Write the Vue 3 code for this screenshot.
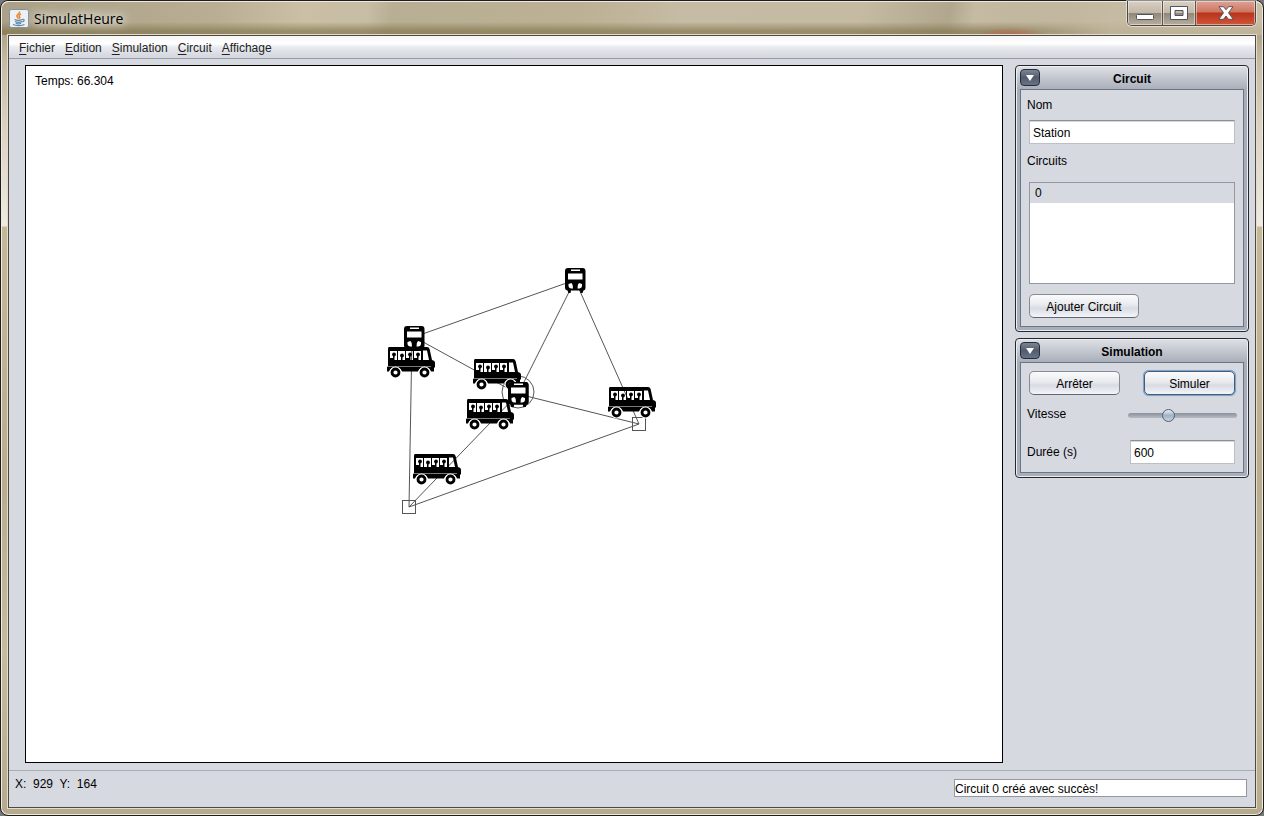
<script setup>
import { ref } from 'vue'

const menus = ['Fichier', 'Edition', 'Simulation', 'Circuit', 'Affichage']
const name = ref('Station')
const circuits = ref(['0'])
const selected = ref('0')
const speed = ref(35)
const duration = ref('600')
const message = ref('Circuit 0 créé avec succès!')

const segments = [
  [549, 214, 388, 271],
  [549, 214, 492, 328],
  [549, 214, 613, 358],
  [388, 271, 492, 328],
  [492, 328, 613, 358],
  [613, 358, 383, 441],
  [492, 328, 383, 441],
  [386, 271, 383, 441],
]
const stations = [[539, 202], [378, 260], [482, 316]]
const nodes = [[606, 351], [376, 434]]
const buses = [[361, 281], [447, 293], [440, 333], [582, 321], [387, 388]]
</script>

<template>
  <div class="window">
    <header class="titlebar">
      <svg class="java" width="20" height="19" viewBox="0 0 20 19" aria-hidden="true">
        <rect x=".5" y=".5" width="19" height="18" rx="2" fill="#eef1f4" stroke="#7d93a8" />
        <path d="M10.5 2.5c1 2-3.5 3-2.500 5 .4.800 1 1.200 1.300 2M12 5c-2 1-2.400 2-1.400 3 .5.700.2 1.200-.4 1.800" fill="none" stroke="#e8822a" stroke-width="1.500" />
        <path d="M5.500 10.500c2 .8 6 .8 8 0M6 12.500c2 .9 5 .9 7 0M6.700 14.300c1.500.6 4 .6 5.500 0M13.500 10.300c2.200-.4 2.300 1.800-.3 2.700M4 15.500c3 1.500 9 1.400 11.500 0" fill="none" stroke="#5f86a3" stroke-width="1.200" />
      </svg>
      <h1>SimulatHeure</h1>
      <div class="controls">
        <button type="button" aria-label="Réduire">
          <svg width="18" height="6"><rect x=".5" y=".5" width="17" height="5" rx="1" fill="#fff" stroke="#4d535f" /></svg>
        </button>
        <button type="button" aria-label="Agrandir">
          <svg width="18" height="14"><path d="M.5.5h17v13H.5zM5 4.500v5h8v-5z" fill="#fff" fill-rule="evenodd" stroke="#4d535f" /></svg>
        </button>
        <button type="button" class="close" aria-label="Fermer">
          <svg width="16" height="14"><path d="M1 .700h4.500L8 3.800 10.500.700H15L10.500 6.800l4.700 6.500h-4.700L8 10l-2.500 3.300H.8l4.700-6.500z" fill="#fff" stroke="#5d5257" /></svg>
        </button>
      </div>
    </header>

    <div class="content">
      <nav class="menubar">
        <button v-for="m in menus" :key="m" type="button"><u>{{ m[0] }}</u>{{ m.slice(1) }}</button>
      </nav>

      <main>
        <section class="canvas">
          <p>Temps: 66.304</p>
          <svg class="network" role="img" aria-label="Réseau">
            <defs>
              <g id="bus">
                <path fill-rule="evenodd" d="M2 0h38q2 0 2.600 2l2.400 11q3 .500 3 3v4.500h-1v4h-3a7 7 0 0 0-13 0H15a7 7 0 0 0-13 0H0V20h1V2q0-2 1-2zM3 4v9h7V4zM11 4v9h7V4zM19 4v9h7V4zM27 4v9h7V4zM36 3.500V13h6l-2-9.500z" />
                <path d="M0 19.500h44" stroke="#999" stroke-width=".8" />
                <g fill="#fff" stroke="#fff" stroke-width="6">
                  <circle cx="8.500" cy="25.500" r="3" /><circle cx="37.500" cy="25.500" r="3" />
                </g>
                <g fill="#fff" stroke="#000" stroke-width="2.800">
                  <circle cx="8.500" cy="25.500" r="3.500" /><circle cx="37.500" cy="25.500" r="3.500" />
                </g>
                <g>
                  <circle cx="7" cy="7.500" r="1.900" /><circle cx="15" cy="8.500" r="1.900" />
                  <circle cx="23" cy="7.500" r="1.900" /><circle cx="31" cy="7.500" r="1.900" />
                  <path d="M6 8h1.500v5H6zM3 11h3v2H3zM14 9h1.500v4H14zM22 8h1.500v5H22zM19 11h3v2h-3zM30 8h1.500v5H30zM27 11h3v2h-3z" />
                </g>
              </g>
              <g id="stop">
                <path d="M3 0h14.500q3 0 3 3v17q0 2-2 2.500l-1 2.500h-2l-.5-2.500h-9L5.500 25h-2l-1-2.500Q0 22 0 20V3q0-3 3-3z" />
                <path d="M6 1.500h9v1.500H6zM3 5.500h14.500v6H3z" fill="#fff" />
                <path d="M3.500 16l3-1q2 2 1.500 5.500H6Q3 20 3.500 16zM17 16l-3-1q-2 2-1.500 5.500h2Q17.500 20 17 16z" fill="#fff" />
              </g>
            </defs>
            <g fill="none" stroke="#555" stroke-width="1">
              <line v-for="(s, i) in segments" :key="i" :x1="s[0]" :y1="s[1]" :x2="s[2]" :y2="s[3]" />
              <rect v-for="(n, i) in nodes" :key="i" :x="n[0] + 0.5" :y="n[1] + 0.5" width="13" height="13" />
              <circle cx="492" cy="326" r="16" />
            </g>
            <use v-for="(s, i) in stations" :key="i" href="#stop" :x="s[0]" :y="s[1]" />
            <use v-for="(b, i) in buses" :key="i" href="#bus" :x="b[0]" :y="b[1]" />
            <use href="#stop" :x="stations[2][0]" :y="stations[2][1]" />
          </svg>
        </section>

        <aside>
          <section class="panel">
            <header>
              <button type="button" class="toggle" aria-label="Replier Circuit"><svg width="8" height="6"><path d="M0 0h8L4 6z" fill="#fff" /></svg></button>
              <h2>Circuit</h2>
            </header>
            <div class="body">
              <label for="nom">Nom</label>
              <input id="nom" v-model="name" class="field" type="text">
              <label for="circuits">Circuits</label>
              <select id="circuits" v-model="selected" size="5">
                <option v-for="c in circuits" :key="c" :value="c">{{ c }}</option>
              </select>
              <button type="button" class="btn add">Ajouter Circuit</button>
            </div>
          </section>

          <section class="panel">
            <header>
              <button type="button" class="toggle" aria-label="Replier Simulation"><svg width="8" height="6"><path d="M0 0h8L4 6z" fill="#fff" /></svg></button>
              <h2>Simulation</h2>
            </header>
            <div class="body sim">
              <div class="row">
                <button type="button" class="btn">Arrêter</button>
                <button type="button" class="btn primary">Simuler</button>
              </div>
              <div class="row speed">
                <label for="vitesse">Vitesse</label>
                <input id="vitesse" v-model="speed" type="range" min="0" max="100">
              </div>
              <div class="row">
                <label for="duree">Durée (s)</label>
                <input id="duree" v-model="duration" class="field" type="text">
              </div>
            </div>
          </section>
        </aside>
      </main>

      <footer>
        <span>X:&nbsp; 929&nbsp; Y:&nbsp; 164</span>
        <input v-model="message" type="text" readonly aria-label="Message">
      </footer>
    </div>
  </div>
</template>

<style>
html, body, #app { height: 100%; }
body { margin: 0; background: #77767a; }
</style>

<style scoped>
* { box-sizing: border-box; }
.window {
  display: flex;
  flex-direction: column;
  min-height: 100%;
  padding: 0 7px 7px;
  border: 1px solid #1f1c1f;
  border-radius: 8px;
  box-shadow: inset 0 0 0 1px #f0ebe0;
  background: linear-gradient(#c6bba2 0, #b0a68b 35px, #c5bba5 60px, #d9d1bf 120px, #efebe2 225px, #c4b897 226px, #b9ad8e 60%, #c7bb9f 80%, #b5aa8c);
  font: 12px/16px "Liberation Sans", Arial, sans-serif;
  color: #000;
}
h1, h2, p { margin: 0; }
button, input, select { font: inherit; color: inherit; }
button { padding: 0; }
.titlebar {
  display: flex;
  align-items: center;
  gap: 5px;
  height: 34px;
  margin: 0 -6px;
  padding: 0 6px 0 7px;
  border-top: 1px solid #f0ebe0;
  border-radius: 7px 7px 0 0;
  background:
    radial-gradient(ellipse 36px 7px at 80% 100%, rgba(196, 92, 70, .7), transparent),
    linear-gradient(90deg, transparent 80%, rgba(200, 190, 165, .8) 88%),
    linear-gradient(transparent 60%, rgba(122, 110, 66, .6) 88%),
    linear-gradient(100deg, #aaa086 0, #b9ae93 17%, #cbbfa5 24%, #c6bda4 29%, #b8ae93 31%, #bcb194 46%, #c6bba4 54%, #c5bba3 68%, #b1a78e 75%, #c5baa2 77%, #b9ad96 88%, #cbbfa8);
}
.java { margin-bottom: 1px; }
h1 {
  font: 14px/20px "Open Sans", "Noto Sans", sans-serif;
  text-shadow: 0 0 8px #fff, 0 0 12px rgba(255, 255, 255, .8), 0 0 16px rgba(255, 255, 255, .7);
}
.controls {
  display: flex;
  align-self: flex-start;
  height: 25px;
  margin: -1px 0 0 auto;
  border: 1px solid #4e4740;
  border-top: 0;
  border-radius: 0 0 5px 5px;
  box-shadow: 0 0 0 1px rgba(255, 255, 255, .5);
  overflow: hidden;
}
.controls button {
  display: grid;
  place-items: center;
  width: 35px;
  border: 0;
  border-right: 1px solid #5b534a;
  background: linear-gradient(#d9d0c3 0, #c2b8a9 48%, #8e8678 50%, #b8ae9c);
  box-shadow: inset 0 0 0 1px rgba(255, 255, 255, .45);
}
.controls button:first-child svg { margin-top: 8px; }
.controls button + button { width: 33px; }
.controls .close,
.controls button + .close {
  width: 59px;
  border: 0;
  background: linear-gradient(#dfa394 0, #cd7561 46%, #b8331b 50%, #d2553a);
}
.content {
  display: flex;
  flex-direction: column;
  flex: 1;
  border: 1px solid #4d4a45;
  outline: 1px solid #e4dccb;
  background: #d6d9e0;
}
.menubar {
  display: flex;
  gap: 10px;
  height: 23px;
  padding: 0 10px;
  border-bottom: 1px solid #959aa5;
  background: linear-gradient(#f6f6f7, #fff 35%, #e9ebef 50%, #d6d9e0 90%);
}
.menubar button { padding-top: 1px; border: 0; background: none; color: #222; }
u { text-underline-offset: 2px; }
main {
  display: flex;
  flex: 1;
  gap: 12px;
  padding: 6px 6px 7px 16px;
}
.canvas {
  position: relative;
  flex: 1;
  min-width: 0;
  border: 1px solid #000;
  background: #fff;
}
.canvas p { padding: 7px 9px; }
.network { position: absolute; inset: 0; width: 100%; height: 100%; }
aside { display: flex; flex-direction: column; gap: 6px; width: 234px; }
.panel {
  padding: 0 4px 4px;
  border: 1px solid #24282e;
  border-radius: 4px;
  box-shadow: inset 0 0 0 1px #eceef2;
  background: linear-gradient(#dfe1e6, #a7adb8 24px, #a9afba);
}
.panel header {
  display: grid;
  grid-template-columns: 20px 1fr 20px;
  align-items: center;
  height: 23px;
}
.toggle {
  display: grid;
  place-items: center;
  width: 20px;
  height: 17px;
  border: 1px solid #262c38;
  border-radius: 4px;
  background: linear-gradient(#7c8596, #535c6d 50%, #687386);
}
h2 { padding-top: 2px; font: bold 12px/16px "Liberation Sans", Arial, sans-serif; text-align: center; }
.body {
  display: flex;
  flex-direction: column;
  padding: 7px 8px 8px;
  border: 1px solid #6b7583;
  background: #d6d9e0;
}
label { margin-left: -2px; }
.field {
  width: 100%;
  height: 24px;
  padding: 1px 3px 0;
  border: 1px solid #bcc0c6;
  border-top-color: #8a8f96;
  border-radius: 0;
  background: #fff;
  box-shadow: inset 0 1px #d5d7da;
  outline: 0;
}
.body > .field { margin: 7px 0 9px; }
select {
  height: 102px;
  margin: 13px 0 10px;
  padding: 0;
  border: 1px solid #9297a1;
  border-radius: 0;
  background: #fff;
  outline: 0;
  overflow: hidden;
}
option { min-height: 20px; padding: 3px 5px 1px; color: #000; }
option:checked { background: #d6d9e0 linear-gradient(#d6d9e0, #d6d9e0); }
.btn {
  width: 91px;
  height: 24px;
  padding-top: 1px;
  border: 1px solid #858b96;
  border-bottom-color: #62676f;
  border-radius: 5px;
  background: linear-gradient(#fbfbfc, #e8eaee 45%, #d8dbe2 60%, #f3f5fa);
}
.btn.add { width: 110px; }
.btn.primary { border-color: #4b5a6c; box-shadow: 0 0 0 1px #7aa5d2, 0 0 1px 1px #7aa5d2; }
.row { display: flex; align-items: center; justify-content: space-between; }
.sim { padding: 8px; }
.speed { height: 21px; margin: 8px -2px 16px 0; }
.row .field { width: 105px; }
input[type="range"] {
  width: 109px;
  height: 14px;
  margin: 4px 0 0;
  appearance: none;
  background: transparent;
}
input[type="range"]::-webkit-slider-runnable-track {
  height: 5px;
  border-radius: 3px;
  background: linear-gradient(#8b919c, #b5bac4);
}
input[type="range"]::-webkit-slider-thumb {
  width: 13px;
  height: 13px;
  margin-top: -4px;
  appearance: none;
  border: 1px solid #55616e;
  border-radius: 50%;
  background: linear-gradient(#e8eef3, #9fb4c6 50%, #c5d5e2);
}
footer {
  display: flex;
  align-items: flex-start;
  justify-content: space-between;
  height: 37px;
  padding: 5px 8px 0 6px;
  border-top: 1px solid #a8adb7;
}
footer input {
  width: 293px;
  height: 18px;
  margin-top: 3px;
  padding: 1px 0 0;
  border: 1px solid #9297a1;
  background: #fff;
}
</style>
